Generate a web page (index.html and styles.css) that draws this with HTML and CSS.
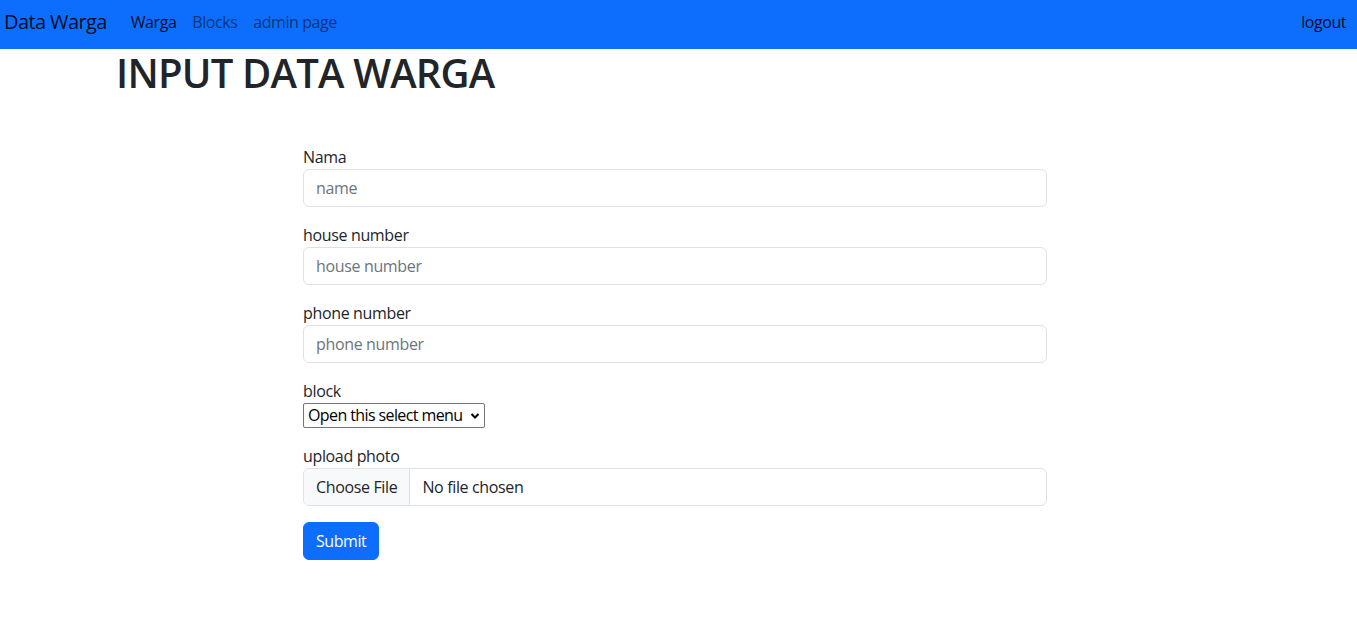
FILE: index.html
```html
<!DOCTYPE html>
<html lang="id">
<head>
<meta charset="utf-8">
<title>Input Data Warga</title>
<link rel="stylesheet" href="styles.css">
</head>
<body>
<nav class="navbar">
  <div class="nav-left">
    <a class="brand" href="#">Data Warga</a>
    <ul class="nav-links">
      <li><a class="nav-link active" href="#">Warga</a></li>
      <li><a class="nav-link" href="#">Blocks</a></li>
      <li><a class="nav-link" href="#">admin page</a></li>
    </ul>
  </div>
  <a class="nav-link logout" href="#">logout</a>
</nav>
<main class="page">
  <h1 class="title">INPUT DATA WARGA</h1>
  <form class="form">
    <div class="field">
      <label class="label" for="nama">Nama</label>
      <input class="control" id="nama" type="text" placeholder="name">
    </div>
    <div class="field">
      <label class="label" for="house">house number</label>
      <input class="control" id="house" type="text" placeholder="house number">
    </div>
    <div class="field">
      <label class="label" for="phone">phone number</label>
      <input class="control" id="phone" type="text" placeholder="phone number">
    </div>
    <div class="field">
      <label class="label" for="block">block</label>
      <div class="select-wrap">
        <select class="select" id="block">
          <option>Open this select menu</option>
        </select>
        <svg class="chev" width="10" height="8" viewBox="0 0 10 8"><path d="M1.5 2 L5 5.5 L8.5 2" fill="none" stroke="#000" stroke-width="2"/></svg>
      </div>
    </div>
    <div class="field">
      <label class="label">upload photo</label>
      <div class="file">
        <span class="file-btn">Choose File</span>
        <span class="file-name">No file chosen</span>
      </div>
    </div>
    <button class="btn" type="button">Submit</button>
  </form>
</main>
</body>
</html>
```
FILE: styles.css
```css
* { box-sizing: border-box; }
body {
  margin: 0;
  font-family: "Open Sans", "Noto Sans", sans-serif;
  font-size: 16px;
  line-height: 24px;
  color: #212529;
  background: #fff;
}
a { text-decoration: none; }
.navbar {
  height: 49px;
  background: #0d6efd;
  display: flex;
  align-items: center;
  justify-content: space-between;
  padding: 0 11px 6px 4px;
}
.nav-left { display: flex; align-items: center; }
.brand {
  font-size: 20px;
  color: rgba(0,0,0,.9);
  margin-right: 16px;
  letter-spacing: -0.6px;
}
.nav-links { list-style: none; margin: 0; padding: 0; display: flex; }
.nav-link {
  display: block;
  padding: 8px;
  color: rgba(0,0,0,.55);
  letter-spacing: -0.45px;
}
.nav-link.active { color: rgba(0,0,0,.9); }
.logout { color: rgba(0,0,0,.9); padding-right: 0; }
.page { padding: 0 0 0 116px; }
.title {
  margin: 0;
  font-size: 40px;
  line-height: 48px;
  font-weight: 600;
  letter-spacing: -0.8px;
}
.form {
  width: 744px;
  margin: 48px 0 0 187px;
}
.field { margin-bottom: 16px; }
.label { display: block; letter-spacing: -0.35px; }
.control {
  display: block;
  width: 100%;
  height: 38px;
  padding: 6px 12px;
  font: inherit;
  letter-spacing: -0.35px;
  color: #212529;
  border: 1px solid #dee2e6;
  border-radius: 6px;
  background: #fff;
}
.control::placeholder { color: #6c757d; }
.select-wrap { position: relative; display: inline-block; vertical-align: top; }
.select {
  appearance: none;
  -webkit-appearance: none;
  font: inherit;
  letter-spacing: -0.6px;
  color: #000;
  width: 182px;
  height: 25px;
  padding: 0 16px 0 4px;
  border: 1px solid #767676;
  border-radius: 2px;
  background: #fff;
  line-height: 23px;
}
.chev { position: absolute; right: 5px; top: 9px; pointer-events: none; }
.file {
  display: flex;
  height: 38px;
  border: 1px solid #dee2e6;
  border-radius: 6px;
  overflow: hidden;
  letter-spacing: -0.35px;
}
.file-btn {
  display: flex;
  align-items: center;
  padding: 0 12px;
  background: #f8f9fa;
  border-right: 1px solid #dee2e6;
}
.file-name { display: flex; align-items: center; padding: 0 12px; }
.btn {
  font: inherit;
  letter-spacing: -0.45px;
  color: #fff;
  background: #0d6efd;
  border: 1px solid #0d6efd;
  border-radius: 6px;
  height: 38px;
  padding: 0 12px;
}
```
